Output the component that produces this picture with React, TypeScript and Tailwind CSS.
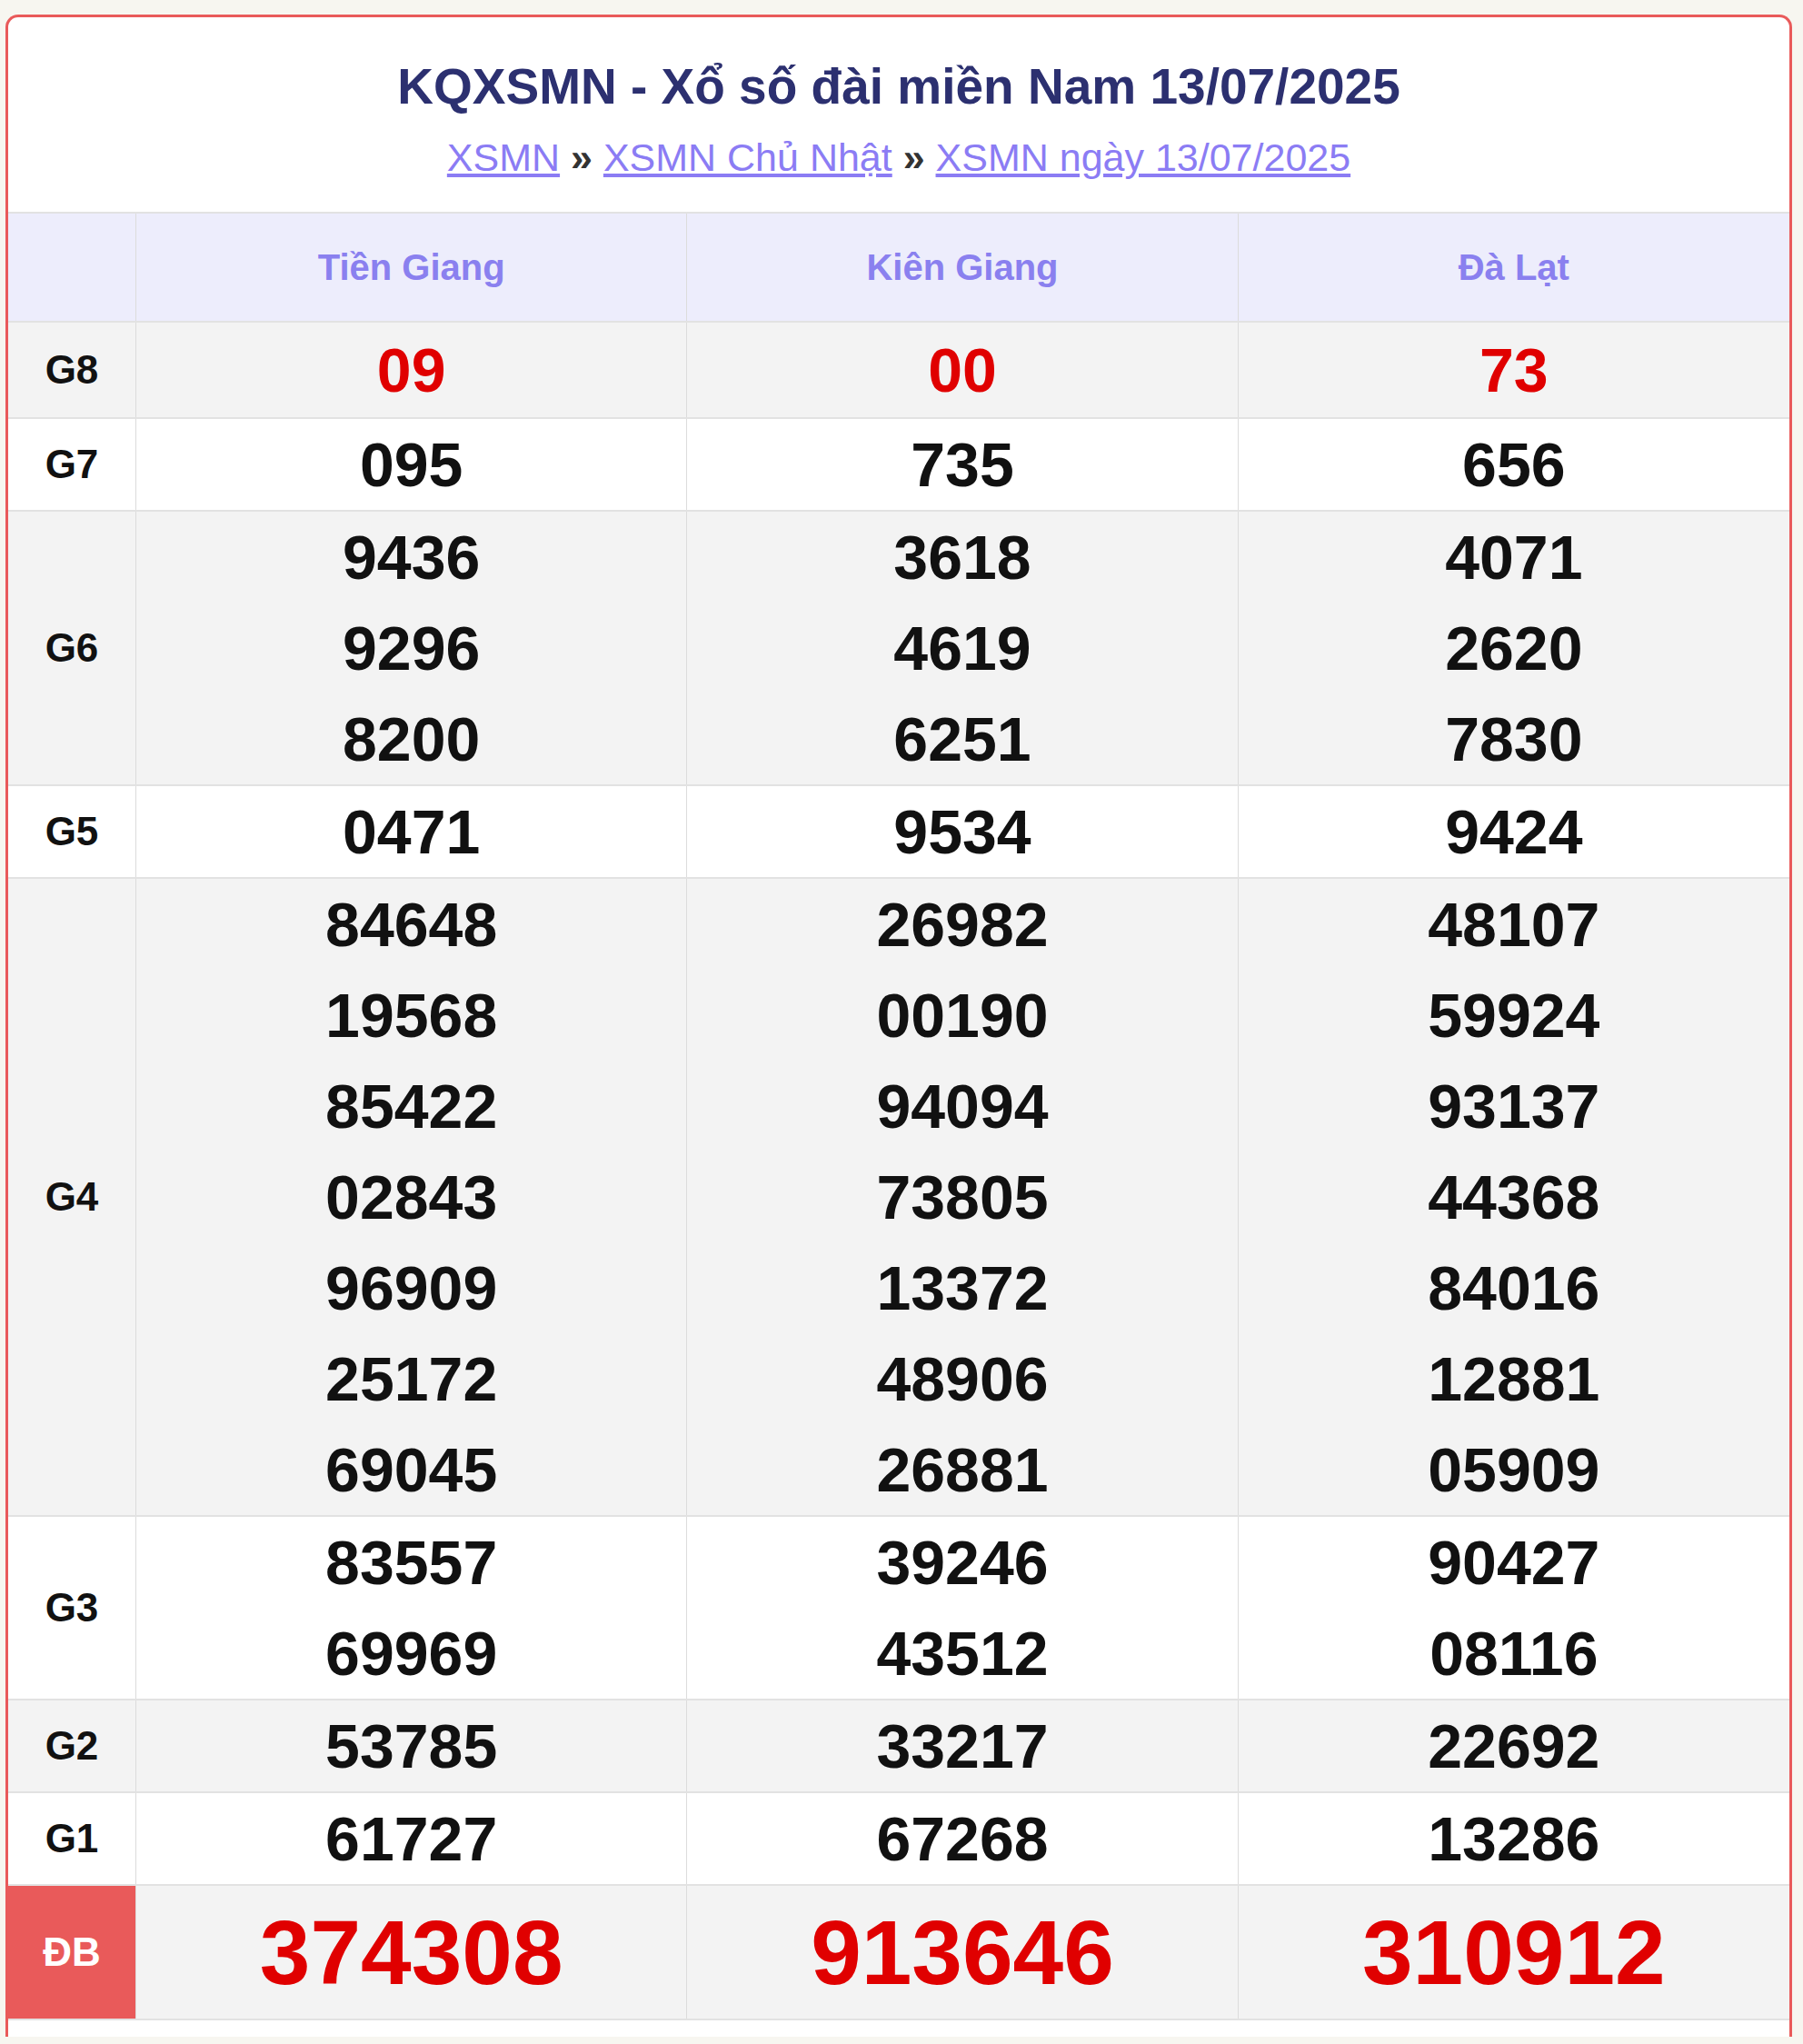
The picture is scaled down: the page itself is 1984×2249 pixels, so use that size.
const font = { fontFamily: '"Liberation Sans", Arial, sans-serif' };

type Row = { label: string; values: string[][]; tone: 'gray' | 'white'; kind?: 'g8' | 'db' };

const rows: Row[] = [
  { label: 'G8', values: [['09'], ['00'], ['73']], tone: 'gray', kind: 'g8' },
  { label: 'G7', values: [['095'], ['735'], ['656']], tone: 'white' },
  {
    label: 'G6',
    values: [
      ['9436', '9296', '8200'],
      ['3618', '4619', '6251'],
      ['4071', '2620', '7830'],
    ],
    tone: 'gray',
  },
  { label: 'G5', values: [['0471'], ['9534'], ['9424']], tone: 'white' },
  {
    label: 'G4',
    values: [
      ['84648', '19568', '85422', '02843', '96909', '25172', '69045'],
      ['26982', '00190', '94094', '73805', '13372', '48906', '26881'],
      ['48107', '59924', '93137', '44368', '84016', '12881', '05909'],
    ],
    tone: 'gray',
  },
  {
    label: 'G3',
    values: [
      ['83557', '69969'],
      ['39246', '43512'],
      ['90427', '08116'],
    ],
    tone: 'white',
  },
  { label: 'G2', values: [['53785'], ['33217'], ['22692']], tone: 'gray' },
  { label: 'G1', values: [['61727'], ['67268'], ['13286']], tone: 'white' },
  { label: 'ĐB', values: [['374308'], ['913646'], ['310912']], tone: 'gray', kind: 'db' },
];

const provinces = ['Tiền Giang', 'Kiên Giang', 'Đà Lạt'];

export default function App() {
  return (
    <div className="min-h-[2249px] w-[1984px] bg-[#f7f6f0] pt-[16px] pl-[6px]" style={font}>
      <div className="w-[1966px] overflow-hidden rounded-t-[14px] border-[3px] border-b-0 border-[#e95a5a] bg-white">
        <div className="flex h-[214px] flex-col items-center pt-[44px]">
          <h1 className="text-[55px] font-bold leading-[64px] text-[#2c3070]">
            KQXSMN - Xổ số đài miền Nam 13/07/2025
          </h1>
          <div className="mt-[22px] text-[43px] leading-[48px] text-[#8b7cf4]">
            <a className="underline">XSMN</a>
            <span className="font-bold text-[#333]"> » </span>
            <a className="underline">XSMN Chủ Nhật</a>
            <span className="font-bold text-[#333]"> » </span>
            <a className="underline">XSMN ngày 13/07/2025</a>
          </div>
        </div>

        <div className="grid grid-cols-[141px_1fr_1fr_1fr] border-t-2 border-[#e2e2e2] bg-[#ededfc]">
          <div className="h-[118px] border-r border-[#dcdcdc]" />
          {provinces.map((p, i) => (
            <div
              key={p}
              className={`flex h-[118px] items-center justify-center text-[40px] font-bold text-[#8a80ef] ${i < 2 ? 'border-r border-[#dcdcdc]' : ''}`}
            >
              {p}
            </div>
          ))}
        </div>

        {rows.map((r) => (
          <div
            key={r.label}
            className={`grid grid-cols-[141px_1fr_1fr_1fr] border-t-2 border-[#e2e2e2] ${r.tone === 'gray' ? 'bg-[#f3f3f3]' : 'bg-white'}`}
          >
            <div
              className={`flex items-center justify-center border-r border-[#dcdcdc] text-[44px] font-bold ${r.kind === 'db' ? 'bg-[#e95a5a] text-white' : 'text-[#111]'}`}
            >
              {r.label}
            </div>
            {r.values.map((col, i) => (
              <div
                key={i}
                className={`flex flex-col items-center justify-center ${r.kind === 'g8' ? 'py-[2px]' : 'py-0'} ${i < 2 ? 'border-r border-[#dcdcdc]' : ''}`}
              >
                {col.map((v) => (
                  <div
                    key={v}
                    className={
                      r.kind === 'db'
                        ? 'h-[146px] text-[100px] font-bold leading-[146px] text-[#e00000]'
                        : `h-[100px] text-[68px] font-bold leading-[100px] ${r.kind === 'g8' ? 'text-[#e00000]' : 'text-[#111]'}`
                    }
                  >
                    {v}
                  </div>
                ))}
              </div>
            ))}
          </div>
        ))}
        <div className="h-[20px] border-t-2 border-[#e2e2e2] bg-white" />
      </div>
    </div>
  );
}
